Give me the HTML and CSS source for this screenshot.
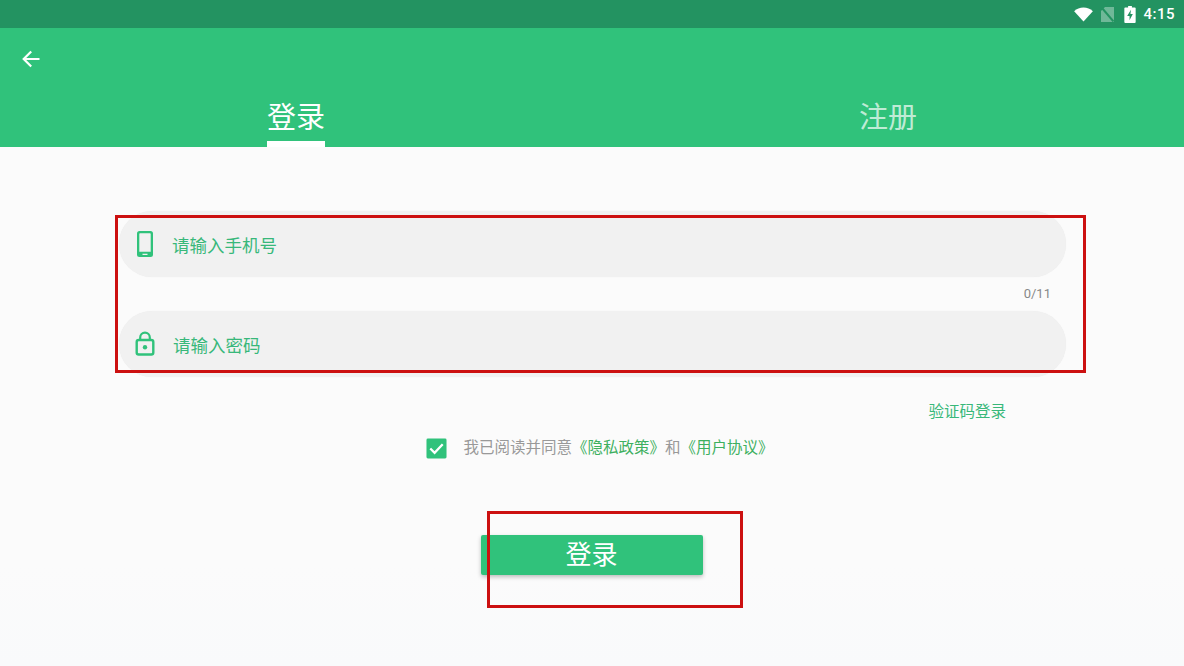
FILE: index.html
```html
<!DOCTYPE html>
<html lang="zh-CN">
<head>
    <meta charset="UTF-8">
    <title>登录</title>
    <link rel="stylesheet" href="styles.css">
</head>
<body>
    <div class="screen">
        <div class="status-bar">
            <svg class="status-icon wifi" width="19" height="15" viewBox="0 0 20 16"><path d="M0 4.500C2.800 1.900 6.200.6 10 .6s7.200 1.300 10 3.900L10 15.500z" fill="#fff"/></svg>
            <svg class="status-icon sim" width="13" height="15" viewBox="0 0 13 15"><path d="M4 0H13V15H0V4z" fill="#fff" opacity=".35"/><path d="M1 1L12.500 14.500" stroke="#239361" stroke-width="2"/></svg>
            <svg class="status-icon battery" width="12" height="17" viewBox="0 0 12 18"><path fill-rule="evenodd" d="M4 0h4v1.500h3a1 1 0 0 1 1 1V17a1 1 0 0 1-1 1H1a1 1 0 0 1-1-1V2.500a1 1 0 0 1 1-1h3zM7 4L3 10.500h2.500V15L9 8.500H6.500z" fill="#fff"/></svg>
            <span class="clock">4:15</span>
        </div>

        <div class="app-header">
            <div class="toolbar">
                <svg width="20" height="20" viewBox="0 0 20 20"><path d="M18.500 10H3M10.200 2.500L2.700 10l7.500 7.500" fill="none" stroke="#fff" stroke-width="2.200"/></svg>
            </div>
            <div class="tabs">
                <div class="tab active"><span class="tab-label">登录</span></div>
                <div class="tab"><span class="tab-label">注册</span></div>
            </div>
        </div>

        <div class="content">
            <div class="field">
                <svg class="field-icon" width="18" height="26" viewBox="0 0 18 26"><path fill-rule="evenodd" d="M3.500 0h11A2.500 2.500 0 0 1 17 2.500v21a2.500 2.500 0 0 1-2.500 2.500h-11A2.500 2.500 0 0 1 1 23.500v-21A2.500 2.500 0 0 1 3.500 0zM3.300 3V20.800H14.700V3a.7.700 0 0 0-.7-.7H4a.7.700 0 0 0-.7.700zM6.500 22.800v1.300h5v-1.300z" fill="#30c27b"/></svg>
                <span class="hint">请输入手机号</span>
            </div>
            <div class="counter">0/11</div>
            <div class="field field-password">
                <svg class="field-icon lock" width="20" height="26" viewBox="0 0 20 26"><path d="M5.200 9V6.500a4.800 4.800 0 0 1 9.600 0V9" fill="none" stroke="#30c27b" stroke-width="2.200"/><rect x="1.700" y="9" width="16.600" height="14.500" rx="2" fill="none" stroke="#30c27b" stroke-width="2.400"/><circle cx="10" cy="16.200" r="2.200" fill="#30c27b"/></svg>
                <span class="hint">请输入密码</span>
            </div>

            <div class="code-login"><span>验证码登录</span></div>

            <div class="agreement">
                <svg class="checkbox" width="21" height="21" viewBox="0 0 22 22"><rect width="21" height="21" x=".5" y=".5" rx="1.500" fill="#30c27b"/><path d="M4.500 11l4.500 4.500 8.500-9" fill="none" stroke="#fff" stroke-width="2.400"/></svg>
                <span class="agreement-text">我已阅读并同意<a>《隐私政策》</a>和<a>《用户协议》</a></span>
            </div>

            <button class="login-btn">登录</button>
        </div>

        <div class="mark mark-fields"></div>
        <div class="mark mark-button"></div>
    </div>
</body>
</html>
```

FILE: styles.css
```css
:root {
    --green: #30c27b;
    --green-dark: #239361;
    --green-text: #38b87a;
    --field-bg: #f1f1f1;
    --mark-red: #cc1010;
}

* {
    box-sizing: border-box;
}

html, body {
    margin: 0;
    height: 100%;
    overflow: hidden;
}

body {
    font-family: "Roboto", "Noto Sans CJK SC", sans-serif;
}

.screen {
    position: relative;
    width: 1184px;
    height: 666px;
    display: flex;
    flex-direction: column;
    background: linear-gradient(#fbfbfb 0, #fbfbfb 85%, #f9fafb 100%);
}

.status-bar {
    height: 28px;
    background: var(--green-dark);
    display: flex;
    align-items: center;
    justify-content: flex-end;
    padding-right: 9px;
}

.wifi {
    margin-right: 8px;
}

.sim {
    margin-right: 10px;
}

.battery {
    margin-right: 7px;
}

.clock {
    color: #fff;
    font-size: 15px;
    font-weight: 500;
    letter-spacing: .5px;
}

.app-header {
    height: 119px;
    background: var(--green);
    display: flex;
    flex-direction: column;
}

.toolbar {
    height: 62px;
    padding: 21px 0 0 21px;
}

.tabs {
    flex: 1;
    display: flex;
}

.tab {
    width: 50%;
    display: flex;
    justify-content: center;
}

.tab-label {
    height: 57px;
    padding-top: 7px;
    color: rgba(255, 255, 255, .7);
    font-size: 29px;
    line-height: 42px;
}

.tab.active .tab-label {
    color: #fff;
    border-bottom: 6px solid #fff;
}

.content {
    flex: 1;
    padding: 64px 118px 0 119px;
    display: flex;
    flex-direction: column;
}

.field {
    height: 66px;
    background: var(--field-bg);
    border-radius: 33px;
    display: flex;
    align-items: center;
    padding-left: 17px;
    box-shadow: 0 0 1px rgba(0, 0, 0, .08);
}

.field-password {
    padding-left: 16px;
}

.field-icon {
    flex: none;
}

.hint {
    margin-left: 18px;
    padding-top: 4px;
    color: var(--green-text);
    font-size: 17.5px;
    line-height: 24px;
}

.field-password .hint {
    margin-left: 18px;
    padding-top: 4px;
}

.counter {
    height: 34px;
    padding: 9px 15px 0 0;
    text-align: right;
    color: #888;
    font-size: 13px;
    line-height: 16px;
}

.code-login {
    margin-top: 25px;
    padding-right: 60px;
    text-align: right;
    color: var(--green-text);
    font-size: 15.5px;
    line-height: 20px;
}

.agreement {
    margin-top: 14px;
    display: flex;
    align-items: center;
    justify-content: center;
    padding-left: 15px;
}

.checkbox {
    flex: none;
}

.agreement-text {
    margin-left: 16px;
    color: #999;
    font-size: 15.5px;
    line-height: 24px;
}

.agreement-text a {
    color: #3eb05f;
}

.login-btn {
    align-self: center;
    width: 222px;
    height: 40px;
    margin-top: 75px;
    margin-right: 2px;
    padding: 0;
    border: none;
    border-radius: 2px;
    background: var(--green);
    color: #fff;
    font-family: inherit;
    font-size: 26px;
    line-height: 40px;
    box-shadow: 0 2px 4px rgba(0, 0, 0, .25);
}

/* red annotation boxes drawn over the screen */
.mark {
    position: absolute;
    border: 3px solid var(--mark-red);
}

.mark-fields {
    left: 115px;
    top: 215px;
    width: 971px;
    height: 158px;
}

.mark-button {
    left: 487px;
    top: 511px;
    width: 256px;
    height: 97px;
}
```
